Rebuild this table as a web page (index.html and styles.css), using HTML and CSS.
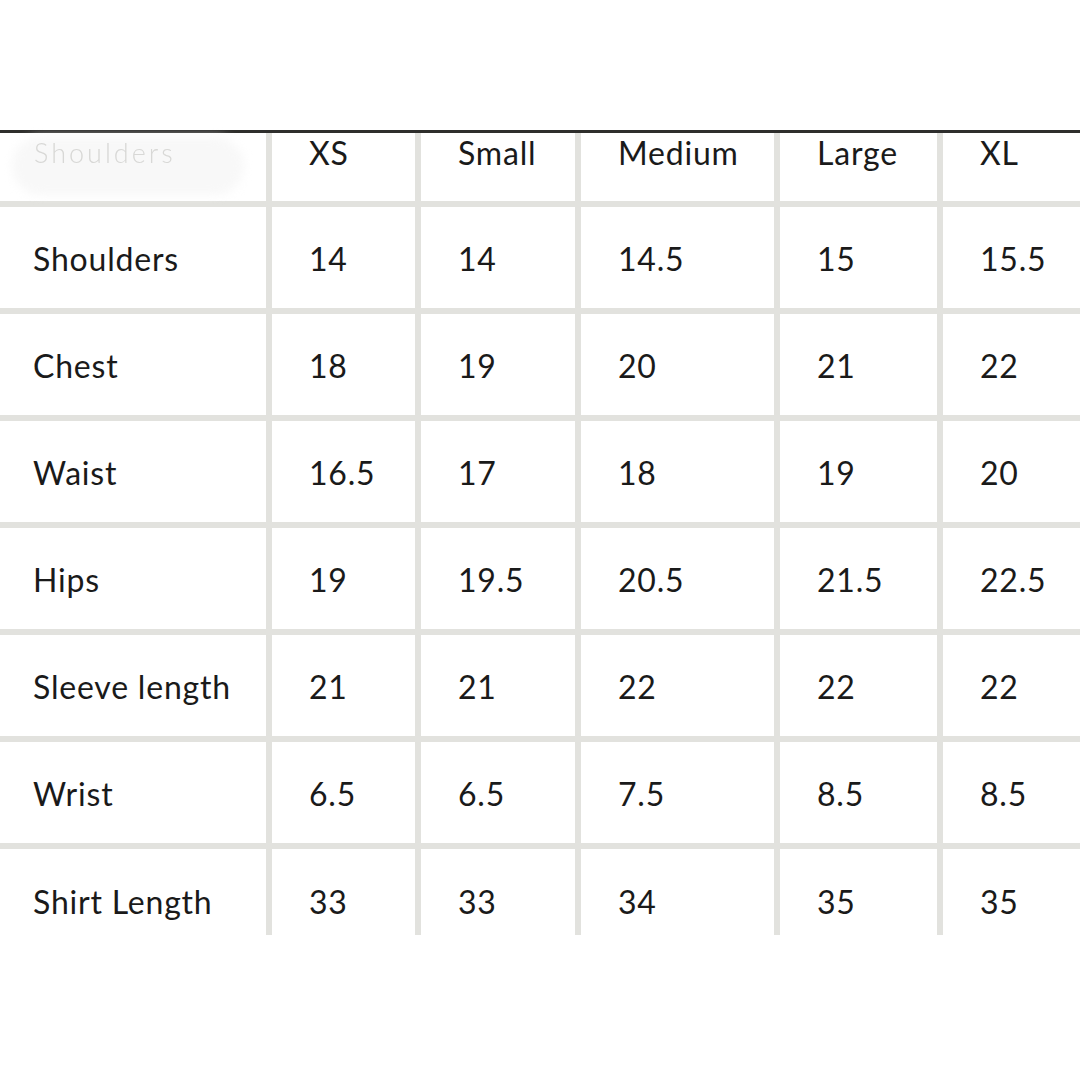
FILE: index.html
```html
<!DOCTYPE html>
<html lang="en">
<head>
<meta charset="utf-8">
<title>Size chart</title>
<link rel="stylesheet" href="styles.css">
</head>
<body>
<div class="page">
  <div class="chart">
    <div class="cell head ghost"><span class="ghost-blob"></span><span class="ghost-text">Shoulders</span></div>
    <div class="cell head">XS</div>
    <div class="cell head">Small</div>
    <div class="cell head">Medium</div>
    <div class="cell head">Large</div>
    <div class="cell head">XL</div>

    <div class="cell label">Shoulders</div>
    <div class="cell">14</div><div class="cell">14</div><div class="cell">14.5</div><div class="cell">15</div><div class="cell">15.5</div>

    <div class="cell label">Chest</div>
    <div class="cell">18</div><div class="cell">19</div><div class="cell">20</div><div class="cell">21</div><div class="cell">22</div>

    <div class="cell label">Waist</div>
    <div class="cell">16.5</div><div class="cell">17</div><div class="cell">18</div><div class="cell">19</div><div class="cell">20</div>

    <div class="cell label">Hips</div>
    <div class="cell">19</div><div class="cell">19.5</div><div class="cell">20.5</div><div class="cell">21.5</div><div class="cell">22.5</div>

    <div class="cell label">Sleeve length</div>
    <div class="cell">21</div><div class="cell">21</div><div class="cell">22</div><div class="cell">22</div><div class="cell">22</div>

    <div class="cell label">Wrist</div>
    <div class="cell">6.5</div><div class="cell">6.5</div><div class="cell">7.5</div><div class="cell">8.5</div><div class="cell">8.5</div>

    <div class="cell label last">Shirt Length</div>
    <div class="cell last">33</div><div class="cell last">33</div><div class="cell last">34</div><div class="cell last">35</div><div class="cell last">35</div>
  </div>
</div>
</body>
</html>
```

FILE: styles.css
```css
html, body {
  margin: 0;
  padding: 0;
  background: #ffffff;
}

.page {
  width: 1080px;
  height: 1080px;
  padding-top: 130px;
  box-sizing: border-box;
  background: #ffffff;
}

.chart {
  display: grid;
  grid-template-columns: 266px 143px 154px 193px 157px 1fr;
  grid-template-rows: 68px repeat(6, 101px) 86px;
  column-gap: 6px;
  row-gap: 6px;
  background: #e2e2de;
  border-top: 3px solid #2e2e2c;
  font-family: "Lato", "Noto Sans", sans-serif;
  font-weight: 400;
  font-size: 32px;
  letter-spacing: 0.8px;
  color: #1a1a1a;
}

.cell {
  background: #ffffff;
  display: flex;
  align-items: center;
  padding-left: 37px;
  padding-top: 2px;
  box-sizing: border-box;
  line-height: 1;
}

.label {
  padding-left: 33px;
}

.head {
  align-items: flex-start;
  padding-top: 4px;
}

.last {
  align-items: flex-start;
  padding-top: 37px;
}

.ghost {
  position: relative;
  padding-left: 34px;
  padding-top: 6px;
}

.ghost-blob {
  position: absolute;
  left: 12px;
  top: 4px;
  width: 232px;
  height: 58px;
  border-radius: 40px;
  background: #f8f8f8;
  filter: blur(5px);
}

.ghost-text {
  position: relative;
  color: #d8d8d6;
  font-size: 27px;
  font-weight: 300;
  letter-spacing: 3px;
  filter: blur(0.6px);
}
```
